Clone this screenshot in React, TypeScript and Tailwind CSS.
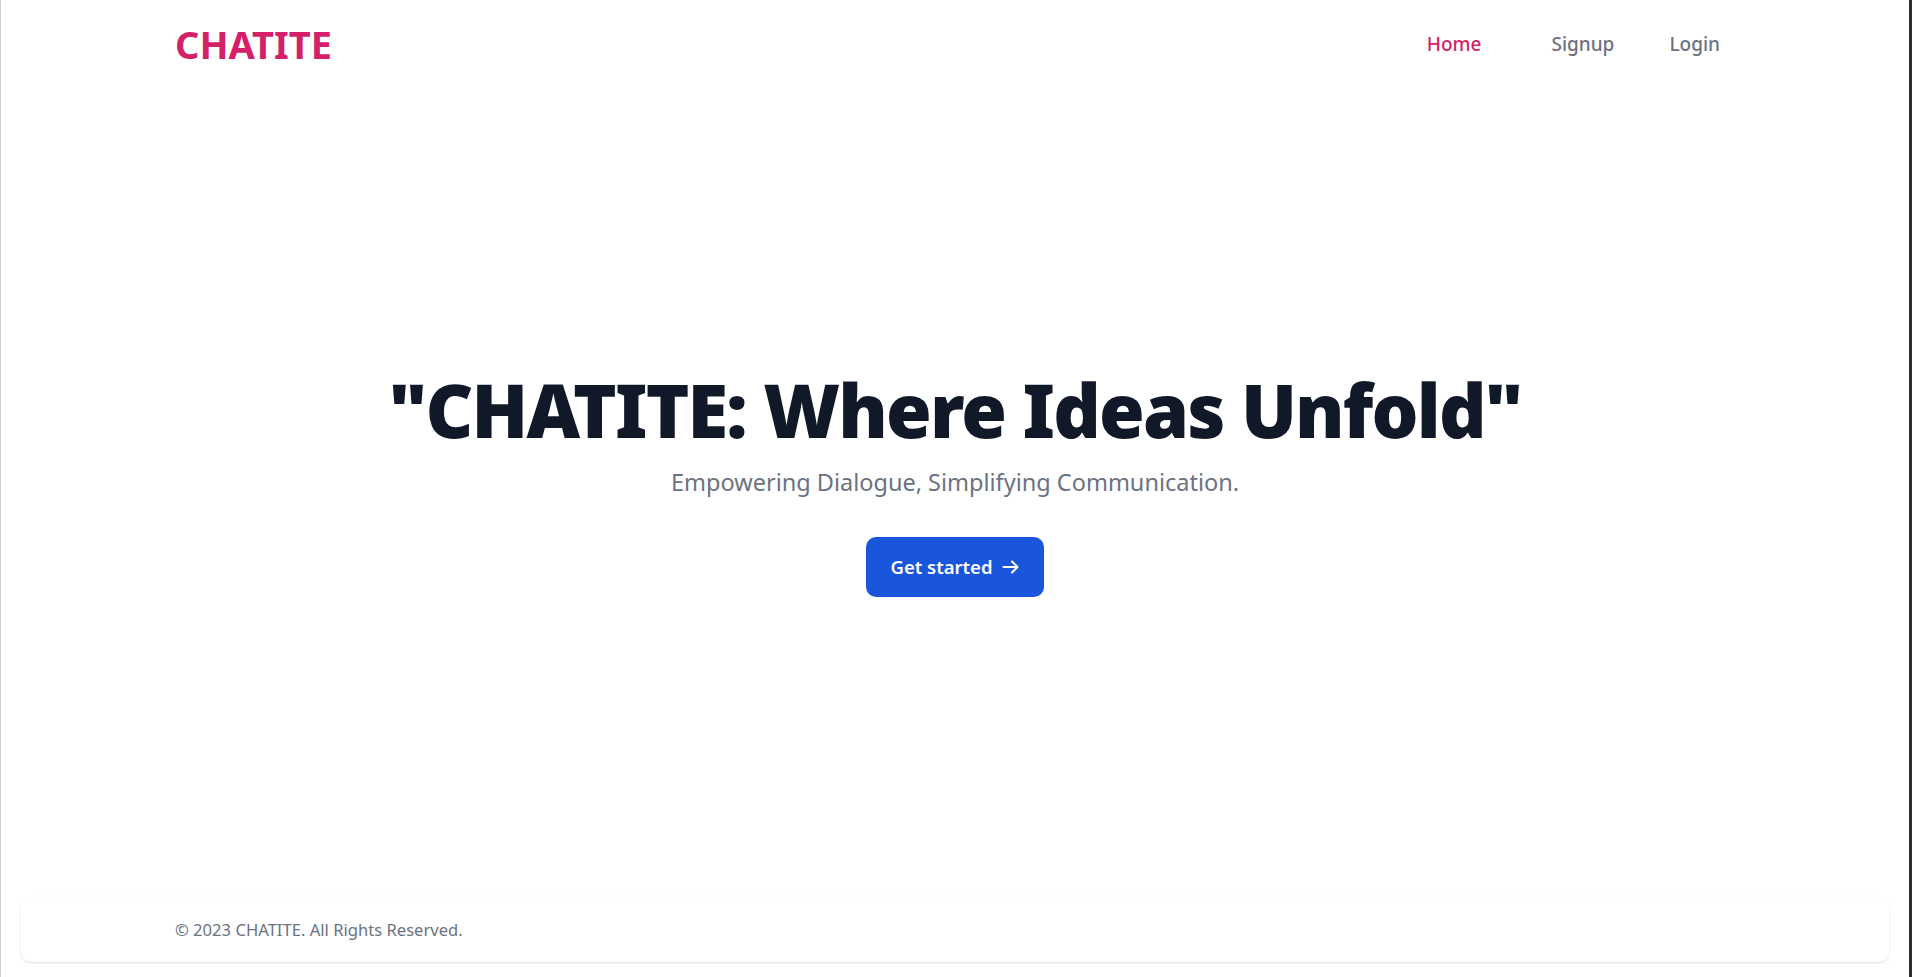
const font = { fontFamily: '"Segoe UI", "Noto Sans", "Open Sans", sans-serif' };

const Navbar: React.FC = () => {
  return (
    <nav className="w-full">
      <div className="mx-auto flex max-w-[1600px] items-center justify-between px-5 py-5">
        <a href="#" className="text-[38px] font-bold leading-[45px] text-[#d61f69]">
          CHATITE
        </a>
        <ul className="flex items-center text-[19px] font-medium">
          <li>
            <a href="#" className="block py-2.5 text-[#d61f69]">
              Home
            </a>
          </li>
          <li className="ml-[70px]">
            <a href="#" className="block py-2.5 text-[#6b7280]">
              Signup
            </a>
          </li>
          <li className="ml-[55px]">
            <a href="#" className="block py-2.5 pr-[15px] text-[#6b7280]">
              Login
            </a>
          </li>
        </ul>
      </div>
    </nav>
  );
};

const Hero: React.FC = () => {
  return (
    <section className="flex flex-1 flex-col items-center justify-center pb-[15px] text-center">
      <h1 className="text-[74px] font-black leading-none tracking-tight text-[#111827]">
        "CHATITE: Where Ideas Unfold"
      </h1>
      <p className="mt-[18px] text-[23.5px] leading-[35px] text-[#6b7280]">
        Empowering Dialogue, Simplifying Communication.
      </p>
      <a
        href="#"
        className="mt-[37px] inline-flex items-center rounded-[10px] bg-[#1a56db] px-[25px] py-[15px] text-[18.5px] font-semibold leading-[30px] text-white"
      >
        Get started
        <svg
          aria-hidden="true"
          className="ml-[10px]"
          width="17"
          height="14"
          viewBox="0 0 17 14"
          fill="none"
          stroke="currentColor"
          strokeWidth="2"
          strokeLinecap="round"
          strokeLinejoin="round"
        >
          <path d="M1.5 7h14M10 1.5 15.5 7 10 12.5" />
        </svg>
      </a>
    </section>
  );
};

const Footer: React.FC = () => {
  return (
    <footer className="mx-5 mb-[15px] rounded-[10px] bg-white shadow">
      <div className="mx-auto max-w-[1600px] p-5">
        <span className="text-[16.6px] leading-[25px] text-[#6b7280]">
          © 2023 CHATITE. All Rights Reserved.
        </span>
      </div>
    </footer>
  );
};

export default function App() {
  return (
    <div
      style={font}
      className="flex h-[977px] flex-col border-l border-r-[3px] border-l-[#cfcfcf] border-r-[#2e2e2e] bg-white"
    >
      <Navbar />
      <Hero />
      <Footer />
    </div>
  );
}
